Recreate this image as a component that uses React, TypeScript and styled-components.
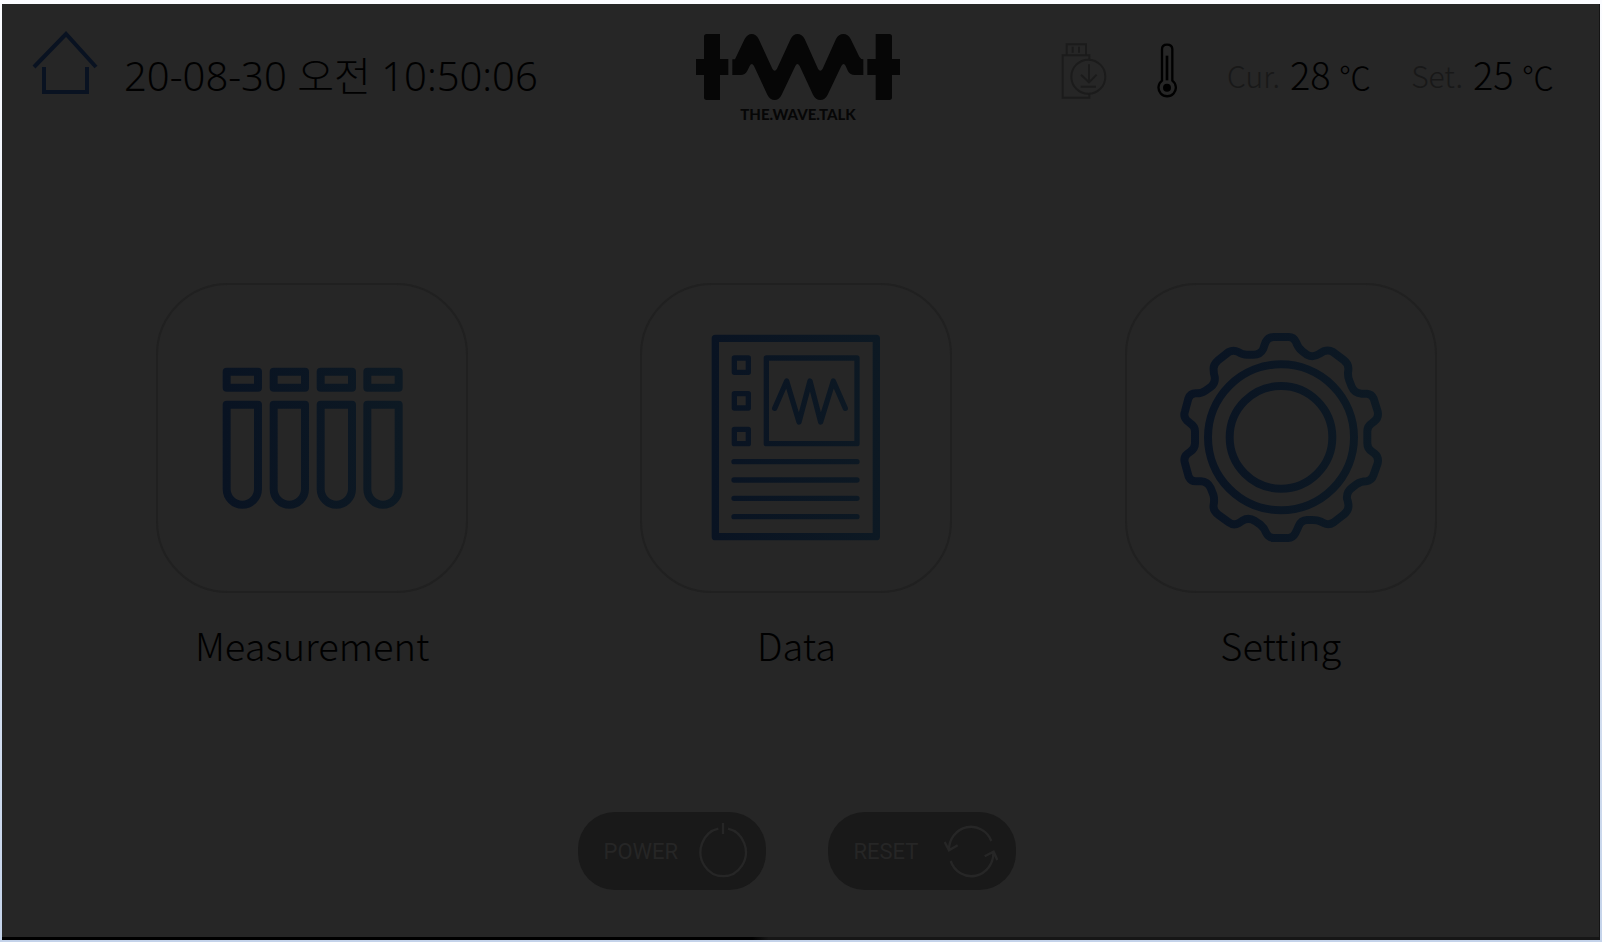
import React from "react";
import styled, { createGlobalStyle } from "styled-components";

const GlobalStyle = createGlobalStyle`
  *, *::before, *::after { box-sizing: border-box; }
  body {
    margin: 0;
    background: linear-gradient(#fbfcff, #c4d3ea);
    font-family: "Noto Sans CJK KR", "Noto Sans", sans-serif;
    font-weight: 300;
    color: #000;
  }
  button { font: inherit; color: inherit; cursor: pointer; }
  svg { display: block; }
`;

const Page = styled.div`
  display: flex;
  min-height: 100vh;
  padding: 4px 2px 2px;
`;

const Screen = styled.div`
  flex: 1;
  display: flex;
  flex-direction: column;
  background: #262626;
  border-right: 1px solid #141414;
`;

const Header = styled.header`
  display: grid;
  grid-template-columns: 1fr auto 1fr;
  align-items: start;
  padding: 26px 35px 0 30px;
`;

const HeaderLeft = styled.div`
  display: flex;
  align-items: flex-start;
  gap: 26px;
`;

const HomeLink = styled.a`
  display: block;
`;

const Clock = styled.time`
  padding-top: 17px;
  font-family: "Noto Sans", "Noto Sans CJK KR", sans-serif;
  font-size: 40px;
  line-height: 58px;
  white-space: nowrap;
`;

const Brand = styled.div`
  display: flex;
  flex-direction: column;
  align-items: center;
  gap: 4px;
  padding-top: 4px;
  color: #060606;
`;

const BrandName = styled.span`
  font-family: Lato, sans-serif;
  font-weight: 900;
  font-size: 15px;
  line-height: 20px;
`;

const Status = styled.div`
  display: flex;
  justify-content: flex-end;
  align-items: flex-start;
  padding: 13px 10px 0 0;
`;

const StatusIcons = styled.div`
  display: flex;
  gap: 50px;
  margin-right: 50px;
`;

const Readings = styled.dl`
  display: flex;
  gap: 40px;
  margin: 0;
`;

const Reading = styled.div`
  display: flex;
  align-items: center;
  gap: 10px;
  line-height: 62px;
  white-space: nowrap;
`;

const ReadingLabel = styled.dt`
  font-size: 30px;
  color: #181818;
`;

const ReadingValue = styled.dd`
  margin: 0;
  font-size: 38px;
`;

const Unit = styled.span`
  font-size: 32px;
`;

const Menu = styled.nav`
  display: grid;
  grid-template-columns: repeat(3, 1fr);
  padding: 159px 76px 0 68px;
`;

const MenuItem = styled.button`
  display: flex;
  flex-direction: column;
  align-items: center;
  gap: 23px;
  padding: 0;
  border: 0;
  background: none;
`;

const Tile = styled.span`
  width: 312px;
  border: 2px solid #202020;
  border-radius: 72px;
`;

const MenuLabel = styled.span`
  font-size: 38px;
  line-height: 58px;
`;

const Actions = styled.div`
  display: flex;
  justify-content: center;
  gap: 62px;
  padding: 138px 8px 44px 0;
`;

const ActionButton = styled.button`
  display: flex;
  align-items: center;
  justify-content: space-between;
  width: 188px;
  height: 78px;
  padding: 0 18px 0 26px;
  border: 0;
  border-radius: 37px;
  background: #191919;
`;

const ActionLabel = styled.span`
  font-family: Roboto, sans-serif;
  font-weight: 400;
  font-size: 22px;
  color: #262626;
`;

const BottomEdge = styled.div`
  height: 3px;
  margin-top: auto;
  background: linear-gradient(90deg, #000 47%, #161616 48%);
`;

function InkGradient({ id, x1, x2 }: { id: string; x1: number; x2: number }) {
  return (
    <defs>
      <linearGradient id={id} gradientUnits="userSpaceOnUse" x1={x1} y1="0" x2={x2} y2="0">
        <stop offset="0" stopColor="#091322" />
        <stop offset="1" stopColor="#0d1923" />
      </linearGradient>
    </defs>
  );
}

function HomeIcon() {
  return (
    <svg width="66" height="66" viewBox="0 0 66 66" fill="none" stroke="#091221" strokeWidth="4">
      <path d="M2 37 34 4l30 33" />
      <path d="M12 37v25h43V37" />
    </svg>
  );
}

function WaveLogo() {
  return (
    <svg width="204" height="66" viewBox="48 42 612 198" fill="currentColor" aria-hidden="true">
      <path d="M80 42H120V117H145V165H120V240H80Q72 240 72 232V165H48V117H72V50Q72 42 80 42Z" />
      <path d="M587 42H628Q636 42 636 50V117H660V165H636V232Q636 240 628 240H587V165H562V117H587Z" />
      <path d="M157 118H165L194 57Q203 42 215 42Q228 42 236 57L277 146Q284 158 291 146L332 57Q340 42 352 42Q366 42 374 57L414 146Q421 158 428 146L468 57Q476 42 490 42Q504 42 512 57L538 110Q542 118 550 118V165H524Q510 165 504 154L497 138Q491 126 484 138L443 224Q435 240 421 240Q407 240 399 224L359 138Q352 126 346 138L305 224Q297 240 284 240Q270 240 262 224L222 138Q215 126 209 138L202 152Q195 165 182 165H157Z" />
    </svg>
  );
}

function UsbIcon() {
  return (
    <svg width="46" height="56" viewBox="33 39 138 168" fill="none" stroke="#1b1b1b" strokeWidth="6" aria-hidden="true">
      <path d="M50 76V43H108V76M68 50V68M87 50V68" />
      <path d="M38 76H118V203H38Z" />
      <circle cx="115" cy="140" r="51" fill="#262626" />
      <path d="M117 103V156M93 134L117 157L140 134M92 170H138" />
    </svg>
  );
}

function ThermometerIcon() {
  return (
    <svg width="20" height="56" viewBox="320 38 60 168" fill="none" stroke="#000" strokeWidth="7" aria-hidden="true">
      <path d="M335 151V57Q335 43 350 43Q366 43 366 57V151A26 26 0 1 1 335 151Z" />
      <path d="M350 76V150" strokeWidth="8" />
      <circle cx="350" cy="172" r="12" fill="#000" stroke="none" />
    </svg>
  );
}

function TubesArt() {
  return (
    <svg width="308" height="306" viewBox="54 45 924 918" fill="none" stroke="url(#tubes)" strokeWidth="24" strokeLinejoin="round" aria-hidden="true">
      <InkGradient id="tubes" x1={248} x2={788} />
      {[260, 401, 542, 682].map((x) => (
        <path key={x} d={`M${x} 305h94v48h-94ZM${x} 404h94v253a47 47 0 0 1-94 0Z`} />
      ))}
    </svg>
  );
}

function ReportArt() {
  return (
    <svg width="308" height="306" viewBox="36 45 924 918" fill="none" stroke="url(#report)" strokeWidth="16" strokeLinejoin="round" strokeLinecap="round" aria-hidden="true">
      <InkGradient id="report" x1={245} x2={750} />
      <path d="M256 205H739V800H256Z" strokeWidth="22" />
      {[264, 371, 478].map((y) => (
        <path key={y} d={`M313 ${y}h42v43h-42Z`} />
      ))}
      <path d="M409 264H681V521H409Z" />
      <path d="M434 415L470 333L507 456L540 333L572 456L610 333L646 415" />
      <path d="M312 575H681M312 630H681M312 685H681M312 740H681" />
    </svg>
  );
}

function GearArt() {
  return (
    <svg width="308" height="306" viewBox="50 45 924 918" fill="none" stroke="url(#gear)" strokeWidth="24" strokeLinejoin="round" aria-hidden="true">
      <InkGradient id="gear" x1={210} x2={814} />
      <circle cx="512" cy="502" r="219" />
      <circle cx="512" cy="502" r="154" />
      <path d="M490 201H536Q550 201 557 216Q562 232 576 244L590 254Q608 264 626 252L640 244Q655 238 668 246L700 270Q716 282 714 300Q711 318 717 332L724 350Q732 370 754 371H770Q784 372 790 386L802 424Q806 442 793 453L784 460Q771 468 771 484V520Q771 536 784 544L793 551Q806 562 802 580L790 614Q784 632 768 634Q752 634 738 643L724 654Q708 666 710 686Q712 690 714 702Q717 720 700 734L670 757Q655 767 640 759L630 754Q622 750 606 750H590Q572 751 565 768Q560 780 555 790Q548 804 534 804H490Q474 803 467 788Q462 774 450 764L434 753Q415 741 396 752L386 759Q370 768 355 757L324 734Q307 722 310 704Q313 688 309 674L301 654Q292 635 272 634H256Q242 634 235 620L224 580Q218 562 232 551L240 545Q254 536 254 520V484Q254 469 240 460L230 452Q218 440 224 424L234 386Q240 370 256 370Q272 371 285 362L302 350Q316 340 313 320Q310 312 310 300Q308 284 322 272L355 246Q369 238 384 246Q396 254 410 254H430Q450 254 459 236Q462 226 466 216Q474 201 490 201Z" />
    </svg>
  );
}

function PowerIcon() {
  return (
    <svg width="50" height="56" viewBox="414 98 150 168" fill="none" stroke="#262626" strokeWidth="7" aria-hidden="true">
      <path d="M475 115A68 72 0 1 0 504 115M489 98V131" />
    </svg>
  );
}

function ResetIcon() {
  return (
    <svg width="54" height="56" viewBox="1148 100 162 168" fill="none" stroke="#262626" strokeWidth="7" aria-hidden="true">
      <path d="M1163 181A66 69 0 0 1 1290 154M1150 157L1163 182L1189 167" />
      <path d="M1168 214A66 69 0 0 0 1296 187M1270 200L1297 186L1308 211" />
    </svg>
  );
}

const menu = [
  { label: "Measurement", art: <TubesArt /> },
  { label: "Data", art: <ReportArt /> },
  { label: "Setting", art: <GearArt /> },
];

const readings = [
  { label: "Cur.", value: 28 },
  { label: "Set.", value: 25 },
];

export default function App() {
  return (
    <>
      <GlobalStyle />
      <Page>
        <Screen>
          <Header>
            <HeaderLeft>
              <HomeLink href="#" aria-label="Home">
                <HomeIcon />
              </HomeLink>
              <Clock>20-08-30 오전 10:50:06</Clock>
            </HeaderLeft>
            <Brand>
              <WaveLogo />
              <BrandName>THE.WAVE.TALK</BrandName>
            </Brand>
            <Status>
              <StatusIcons>
                <UsbIcon />
                <ThermometerIcon />
              </StatusIcons>
              <Readings>
                {readings.map((r) => (
                  <Reading key={r.label}>
                    <ReadingLabel>{r.label}</ReadingLabel>
                    <ReadingValue>
                      {r.value} <Unit>℃</Unit>
                    </ReadingValue>
                  </Reading>
                ))}
              </Readings>
            </Status>
          </Header>
          <Menu>
            {menu.map((m) => (
              <MenuItem key={m.label} type="button">
                <Tile>{m.art}</Tile>
                <MenuLabel>{m.label}</MenuLabel>
              </MenuItem>
            ))}
          </Menu>
          <Actions>
            <ActionButton type="button">
              <ActionLabel>POWER</ActionLabel>
              <PowerIcon />
            </ActionButton>
            <ActionButton type="button">
              <ActionLabel>RESET</ActionLabel>
              <ResetIcon />
            </ActionButton>
          </Actions>
          <BottomEdge />
        </Screen>
      </Page>
    </>
  );
}
